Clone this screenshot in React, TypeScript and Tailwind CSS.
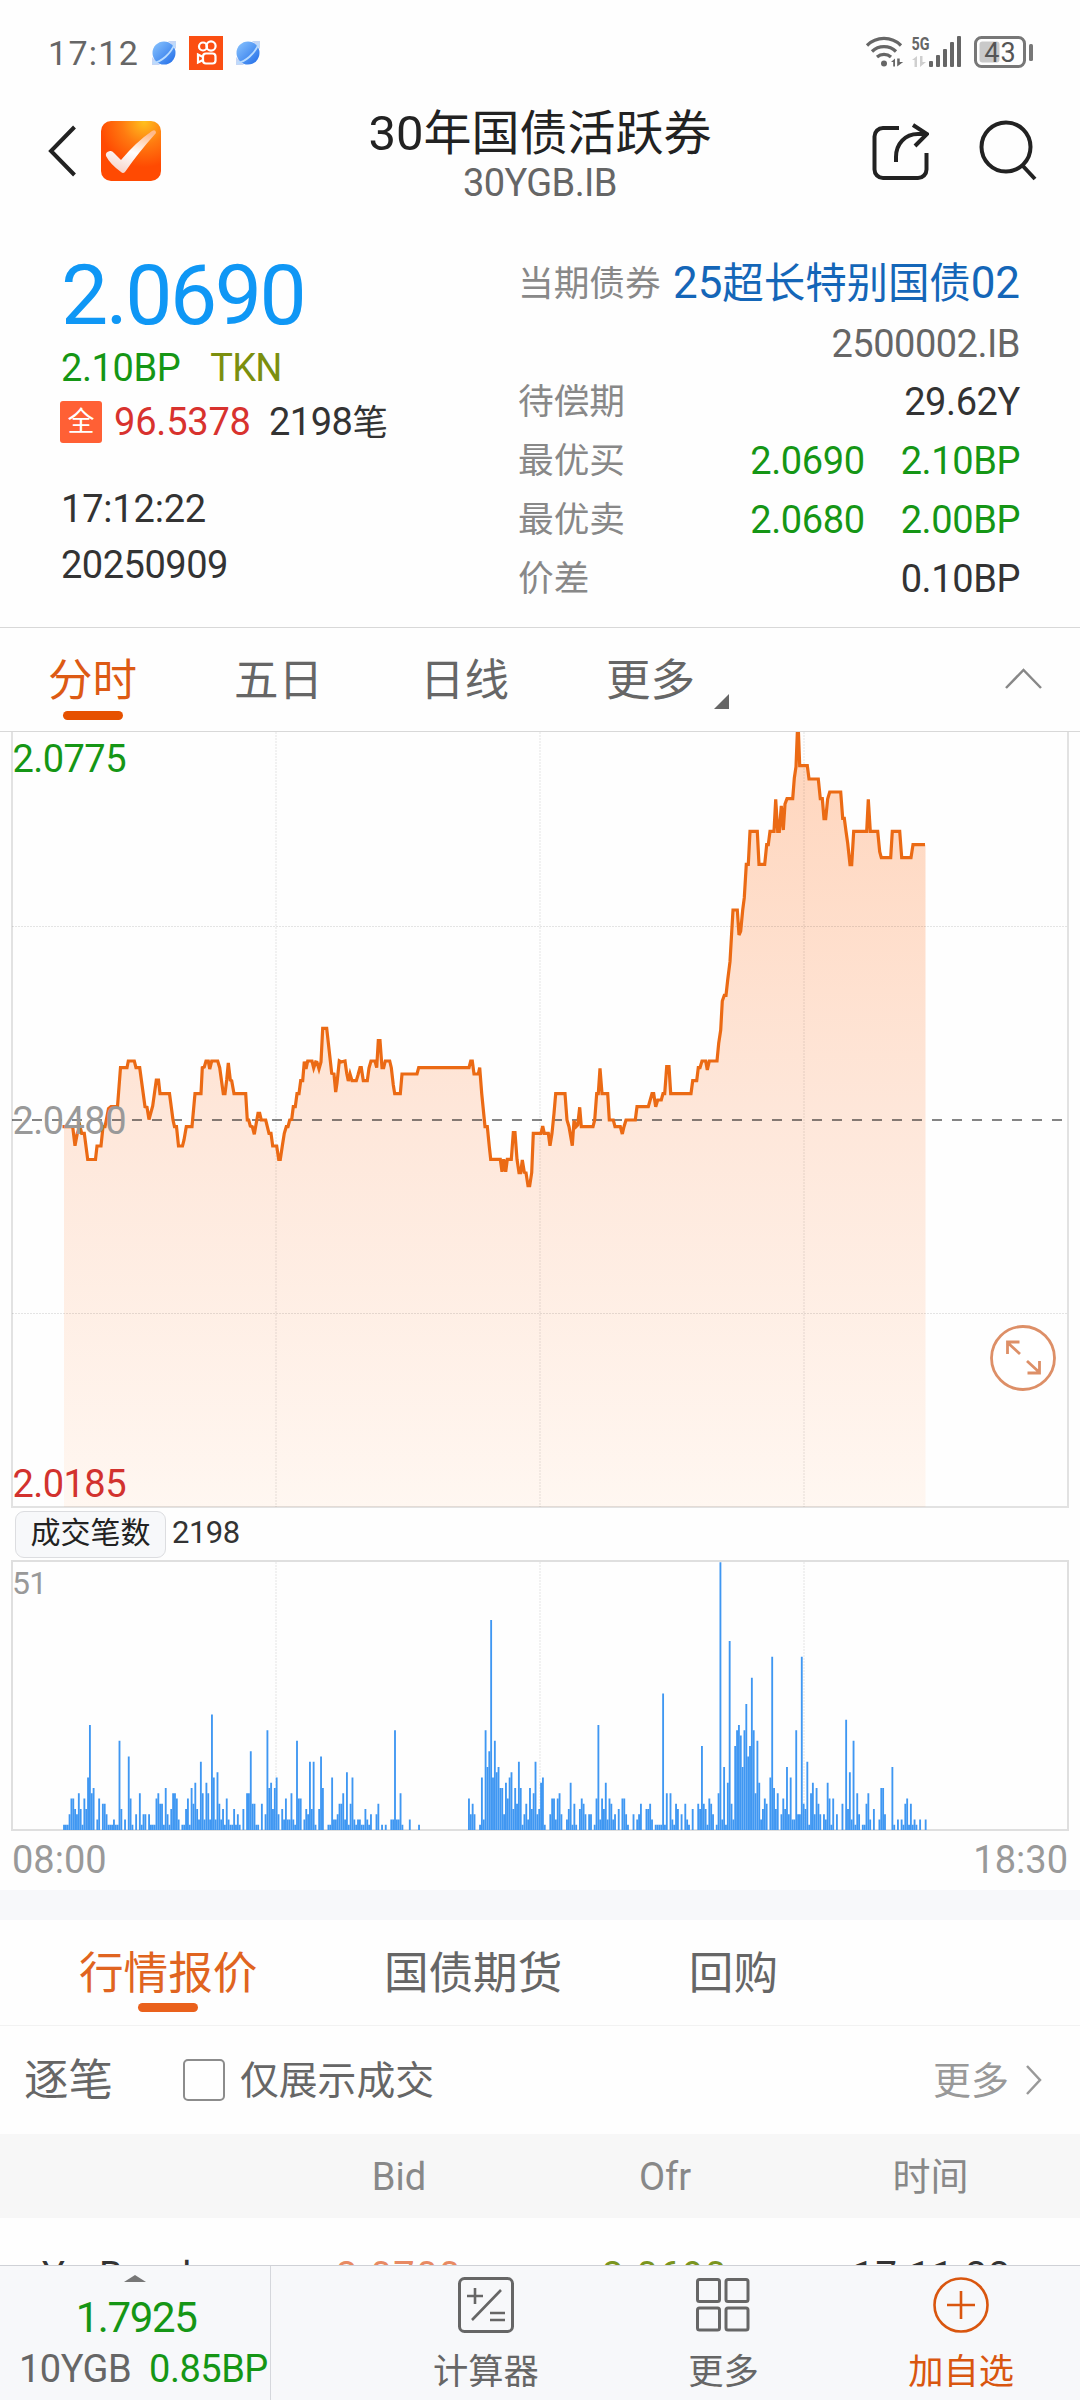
import clsx from 'clsx';

const PRICE_POINTS =
  '62.5,1126.7 72.7,1126.7 75,1145.7 77.3,1133.3 80,1126.5 81.7,1133.3 84.3,1133.3 87.7,1159.5 95.5,1159.5 97,1146 101,1146 103,1126.7 105,1126.7 108.5,1108.7 111,1106.7 117.5,1106.7 120.5,1067.7 127,1067.7 128.3,1061 134.3,1061 136,1067.7 139.7,1067.7 145,1106.7 147,1107.3 149,1119.5 152.7,1106 156.3,1080 158.5,1080 160,1093.7 169.5,1093.7 173,1120 174.5,1126.7 176.5,1126.7 178.5,1146 182.5,1146 184,1140 186.3,1126.7 192,1126.7 195,1093.7 201,1093.7 202.3,1067.7 204.3,1067 206,1061 208.3,1061 209.7,1069 211.7,1061 217.7,1061 219.7,1067.7 223.3,1093.7 225,1093.7 226.7,1080 228.3,1063 230.3,1080 231.7,1080.7 234,1093.7 245.7,1093.7 247.3,1120 248.7,1120 250.3,1126 252.3,1126.7 254.3,1134.3 258,1113.3 259.7,1113.3 261.3,1120 265.7,1120 269,1133.3 271,1133.3 272.7,1146 276.7,1146 278.7,1159.3 280.3,1159.3 282.3,1146 284.3,1133.3 286.3,1126.7 288,1126.7 289.7,1120 291.7,1119.5 293.3,1106.7 295.3,1106.7 297,1093.7 299,1093.7 300.7,1080.7 302.7,1080.7 304.3,1061.7 306,1069 307.7,1061 312,1061 313.7,1068 315.7,1062 317,1062.3 319,1069 321,1062 322.7,1028.3 326.7,1028.3 331.7,1073.3 334,1074 335.7,1092 337,1083 339.3,1061 341,1062 345,1061 346.7,1073.3 348.3,1081 350,1074 352,1080.7 356.3,1080.7 358,1075 360,1067.7 361.3,1067.7 363.3,1080.7 367.3,1080.7 369,1068 371,1061 375,1061 376.7,1067.7 378.3,1040.7 380,1040.7 382,1067.7 383.7,1067.7 385.3,1061 389.7,1061 391.3,1067.7 393.3,1085 394.7,1093.7 400.3,1093.7 402,1074 417,1074 418.7,1067.7 469,1067.7 470.7,1061 472.3,1061 474,1074 478.3,1074 479.7,1067.7 481.7,1093.3 485,1126.7 487.3,1126.7 489.3,1146.7 490.7,1159.3 500.3,1159.3 502,1171.7 503.7,1159.3 505.7,1171.7 507.3,1159.3 511.3,1159.3 513.3,1132.7 515,1132.7 517,1159.3 519,1172.7 520.7,1172.7 522.3,1160 524.3,1172.3 526,1172.7 528,1185.7 529.7,1185.7 531.7,1172.7 533.3,1133.3 541,1133.3 542.7,1126 544.3,1133.3 548.3,1133.3 550,1145.7 552,1133.3 554,1113.3 555.7,1093.7 565,1093.7 567,1120 569,1126.7 572.3,1145.7 574,1120.7 576,1126.7 577.7,1125 579.7,1107.3 581.3,1126.7 593,1126.7 594.7,1120 596.7,1093.7 598.3,1093.7 600,1068.3 602,1093.7 607.7,1093.7 609.3,1120 613.3,1120 615,1126.7 620.3,1126.7 622.3,1134 624,1126.7 626,1120 635.3,1120 637,1106.7 648.3,1106.7 652,1093.7 653.7,1093.7 655.7,1106.7 657.7,1100 661.3,1100 663,1093.7 664.7,1093.7 666.7,1066.7 669,1066.7 670.7,1093.7 691,1093.7 692.7,1080.7 696.7,1080.7 698.3,1067.7 700,1067.7 702,1061 705.7,1061 707.3,1070 709.3,1061 717,1061 718.7,1043.3 720.7,1030 722.3,1001 724.3,995.3 726,995.3 727.7,980 730,961.7 733,910 737.3,910 739,935 740.7,931 742.7,910 744.3,897.7 746.3,864.3 748.3,864.3 750,831.3 757.3,831.3 759,864.3 764.7,864.3 766.7,844.7 768.3,844.7 770,831.3 774,831.3 775.7,799.3 777.7,831.3 779.3,831.3 781.3,806 783.3,830 785,804 787,798.7 792.7,798.7 794.3,778.3 796,766.7 797.3,733.5 798.5,733.5 799.7,765.7 807.3,765.7 809,779 818.3,779 820.3,798.7 822.3,798.7 824,818.7 825.7,818.7 827.7,798.7 829.7,792 840.7,792 842.7,818.3 844.3,818.3 846,831.3 847.7,843.3 850,864.7 851.7,864.7 853.7,831.3 866.7,831.3 868.3,799.3 870.3,831.3 877.7,831.3 879.7,851.7 881.3,857.7 890.7,857.7 892.3,831.3 899.7,831.3 901.7,857.7 911,857.7 913,844.7 925,844.7';

// trades per minute, starting at the first deal of the day
const MORNING = [
  1, 1, 1, 3, 6, 6, 4, 3, 7, 4, 1, 6, 4, 10, 20, 7, 8, 0, 2, 6, 0, 5, 5, 3, 1, 1, 1, 2, 1, 1, 17, 4, 0, 2, 0, 14, 6, 1, 0, 3,
  0, 7, 1, 3, 3, 0, 3, 1, 1, 1, 6, 7, 5, 5, 1, 8, 3, 1, 4, 7, 7, 6, 2, 0, 1, 1, 4, 6, 1, 8, 5, 9, 4, 2, 13, 7, 2, 9, 7, 2,
  22, 10, 2, 11, 5, 2, 4, 1, 6, 2, 1, 1, 4, 1, 3, 1, 0, 4, 0, 7, 7, 15, 5, 5, 1, 1, 0, 5, 0, 3, 19, 8, 9, 4, 8, 10, 3, 0, 4, 2,
  6, 2, 2, 7, 2, 1, 17, 6, 6, 0, 2, 4, 3, 13, 4, 13, 1, 0, 4, 14, 8, 0, 0, 1, 1, 10, 2, 2, 3, 5, 5, 7, 2, 11, 1, 5, 10, 2, 1, 2,
  2, 1, 1, 4, 2, 1, 3, 0, 0, 3, 5, 0, 1, 0, 1, 0, 0, 2, 2, 19, 2, 2, 7, 1, 0, 0, 0, 2, 0, 0, 0, 0, 1,
];

const AFTERNOON_START = 219;
const AFTERNOON = [
  6, 3, 5, 3, 0, 0, 1, 10, 2, 19, 12, 15, 40, 10, 17, 11, 12, 8, 8, 3, 9, 6, 10, 11, 4, 8, 5, 13, 8, 1, 3, 5, 2, 8, 4, 7, 13, 3, 4, 9,
  10, 1, 0, 0, 3, 6, 6, 2, 6, 7, 3, 0, 0, 2, 4, 9, 1, 5, 1, 0, 4, 6, 5, 3, 0, 3, 3, 0, 1, 6, 20, 2, 6, 4, 9, 2, 6, 5, 2, 3,
  0, 4, 0, 6, 6, 3, 1, 0, 0, 3, 0, 2, 3, 5, 0, 0, 4, 4, 5, 2, 0, 1, 1, 1, 1, 26, 1, 7, 0, 7, 2, 1, 5, 4, 0, 3, 0, 5, 2, 1,
  0, 4, 0, 0, 5, 4, 16, 5, 4, 1, 6, 5, 3, 0, 1, 7, 51, 2, 12, 1, 9, 36, 5, 2, 16, 19, 20, 18, 12, 19, 24, 14, 16, 29, 19, 7, 17, 9, 2, 4,
  6, 5, 0, 10, 33, 8, 4, 7, 0, 3, 6, 4, 12, 3, 10, 2, 2, 19, 3, 3, 33, 5, 4, 13, 1, 7, 9, 3, 8, 5, 3, 0, 3, 2, 9, 6, 1, 6, 0, 3,
  0, 0, 5, 0, 21, 4, 11, 2, 17, 1, 7, 3, 0, 1, 1, 5, 7, 2, 0, 4, 0, 0, 2, 8, 8, 3, 0, 0, 0, 12, 1, 0, 2, 0, 2, 1, 5, 6, 1, 5,
  1, 2, 1, 0, 2, 0, 0, 2,
];

const GRID_X = [276, 540, 804];

const quoteRows = [
  { label: '待偿期', values: ['29.62Y'], color: 'text-[#333]' },
  { label: '最优买', values: ['2.0690', '2.10BP'], color: 'text-[#159615]' },
  { label: '最优卖', values: ['2.0680', '2.00BP'], color: 'text-[#159615]' },
  { label: '价差', values: ['0.10BP'], color: 'text-[#333]' },
];

function Planet() {
  return (
    <svg width="26" height="26" viewBox="0 0 26 26">
      <defs>
        <linearGradient id="planet" x1="0" y1="0" x2="1" y2="1">
          <stop offset="0" stopColor="#8cc6ff" />
          <stop offset="1" stopColor="#1f6be8" />
        </linearGradient>
      </defs>
      <path d="M17 1h8v8zM1 17v8h8z" fill="#c5d6f5" />
      <circle cx="13" cy="13" r="11.5" fill="url(#planet)" />
      <path d="M2 23c8-1 18-9 22-20" stroke="#b9dcff" strokeWidth="1.8" fill="none" />
    </svg>
  );
}

function StatusBar() {
  return (
    <div className="flex h-[101px] items-center justify-between pt-1 pr-[46px] pl-[48px]">
      <div className="flex items-center">
        <span className="w-[103px] text-[34px] leading-none tracking-[1.3px] text-[#666]">17:12</span>
        <Planet />
        <svg className="mx-3" width="34" height="34" viewBox="0 0 34 34">
          <rect width="34" height="34" fill="#fb4e12" />
          <g fill="none" stroke="#fff" strokeWidth="2.2">
            <circle cx="14" cy="10.5" r="4" />
            <circle cx="22" cy="10" r="4.6" />
            <rect x="14" y="17.5" width="12.5" height="10" rx="3" />
            <path d="M14 21l-5-2.5v8l5-2.5" />
          </g>
        </svg>
        <Planet />
      </div>
      <svg className="overflow-visible" width="168" height="34" viewBox="0 0 168 34">
        <g fill="none" stroke="#666" strokeWidth="3.2">
          <path d="M1 9.5a24 24 0 0 1 34 0" />
          <path d="M6 15.5a17 17 0 0 1 24 0" />
          <path d="M11 21a10.5 10.5 0 0 1 14 0" />
        </g>
        <circle cx="18" cy="27.5" r="3" fill="#666" />
        <path d="M25 26l4-3.5v8h-1.8v-4.5zM31.2 22.5v8l6-4.5h-3.5v-3.5z" fill="#666" />
        <text x="45.5" y="13.5" fontSize="19" fontWeight="700" fill="#666" textLength="18" lengthAdjust="spacingAndGlyphs">5G</text>
        <path d="M46 24l5-4v11h-2.5v-7zM54 20v11l6-5h-3.5v-6z" fill="#cfcfcf" />
        <g fill="#666">
          <rect x="63" y="25" width="4" height="6" rx="1" />
          <rect x="70" y="19" width="4" height="12" rx="1" />
          <rect x="77" y="13" width="4" height="18" rx="1" />
          <rect x="84" y="6" width="4" height="25" rx="1" />
          <rect x="91" y="0" width="4" height="31" rx="1" />
        </g>
        <rect x="109.5" y="1.5" width="49" height="29" rx="6" fill="none" stroke="#777" strokeWidth="3" />
        <rect x="113.5" y="5.5" width="20" height="21" rx="3" fill="#c9c9c9" />
        <text x="134.5" y="25.5" fontSize="27" textAnchor="middle" letterSpacing="1" fill="#555">43</text>
        <rect x="163" y="8" width="4" height="17" rx="1.5" fill="#777" />
      </svg>
    </div>
  );
}

function Header() {
  return (
    <header className="grid h-[100px] grid-cols-[240px_1fr_240px] grid-rows-[100px] items-center">
      <div className="flex items-center gap-[25px] pl-[47px]">
        <svg width="29" height="52" viewBox="0 0 29 52">
          <path d="M27.5 2L4 26l23.5 24" fill="none" stroke="#222" strokeWidth="4" />
        </svg>
        <svg width="60" height="60" viewBox="0 0 60 60">
          <defs>
            <radialGradient id="logo" cx="0.72" cy="0.02" r="0.75">
              <stop offset="0" stopColor="#ffc01e" />
              <stop offset="0.5" stopColor="#ff7a10" />
              <stop offset="1" stopColor="#ff4a02" />
            </radialGradient>
            <linearGradient id="tick" x1="0.7" y1="0" x2="0.3" y2="1">
              <stop offset="0" stopColor="#ffb98a" />
              <stop offset="0.5" stopColor="#fff" />
              <stop offset="1" stopColor="#f6d3c8" />
            </linearGradient>
          </defs>
          <rect width="60" height="60" rx="10" fill="url(#logo)" />
          <path d="M5 35q-1-4 4-5 2-.5 4 2l7 7q15-18 31-29 4-2 4 2-18 20-31 39-2 2-4 0-11-8-15-16z" fill="url(#tick)" />
        </svg>
      </div>
      <div className="pt-[3px] text-center">
        <h1 className="text-[48px] leading-[60px] text-[#222]">
          <span className="text-[49px]">30</span>年国债活跃券
        </h1>
        <div className="text-[38px] leading-[38px] tracking-[-0.6px] text-[#666]">30YGB.IB</div>
      </div>
      <div className="flex items-center gap-[50px] pl-[31px]">
        <svg width="58" height="60" viewBox="0 0 58 60" fill="none" stroke="#222" strokeWidth="4">
          <path d="M28 7H12a8.5 8.5 0 0 0-8.5 8.5v33A8.5 8.5 0 0 0 12 57h35a8.5 8.5 0 0 0 8.5-8.5V32" />
          <path d="M25 41V36c0-13 9-23 22-23h9M42 4l14 9-12 12" />
        </svg>
        <svg width="58" height="62" viewBox="0 0 58 62" fill="none" stroke="#222" strokeWidth="4">
          <circle cx="27" cy="27" r="24.5" />
          <path d="M43 45l13 14" />
        </svg>
      </div>
    </header>
  );
}

function Quote() {
  return (
    <section className="flex h-[427px] justify-between border-b border-[#d8d8d8] pt-[53px] pr-[60px] pl-[60px] text-[38px] tracking-[-0.2px] text-[#333]">
      <div>
        <div className="pl-px text-[84px] leading-[84px] tracking-[-2.5px] text-[#0f97f5]">2.0690</div>
        <div className="flex gap-[30px] leading-[60px] text-[#159615]">
          <span className="pl-px tracking-[-0.4px]">2.10BP</span>
          <span className="tracking-[-0.8px] text-[#7b8f0e]">TKN</span>
        </div>
        <div className="flex h-[49px] items-center leading-[49px]">
          <span className="-mt-px h-[42px] w-[42px] rounded-[3px] bg-[#ff6035] text-center text-[27px] leading-[42px] text-white">全</span>
          <span className="ml-3 w-[155px] text-[#d8322e]">96.5378</span>
          <span className="tracking-[-0.5px]">2198<span className="text-[35.5px]">笔</span></span>
        </div>
        <div className="mt-[34px] pl-px leading-14">17:12:22</div>
        <div className="pl-px leading-14 tracking-[-0.5px]">20250909</div>
      </div>
      <div className="w-[502px]">
        <div className="flex h-[60px] items-center justify-between">
          <span className="pt-px text-[35.7px] tracking-normal text-[#888]">当期债券</span>
          <span className="-mt-[3px] text-[41.5px] tracking-[-0.1px] whitespace-nowrap text-[#1466b8]">
            <span className="text-[44px]">25</span>超长特别国债<span className="text-[44px]">02</span>
          </span>
        </div>
        <div className="h-[59px] text-right leading-[60px] tracking-[-0.5px] text-[#666]">2500002.IB</div>
        {quoteRows.map((row) => (
          <div key={row.label} className="flex h-[59px] items-center justify-between">
            <span className="pt-px text-[35.7px] tracking-normal text-[#888]">{row.label}</span>
            <span className={clsx('flex gap-9 tracking-[-0.4px]', row.color)}>
              {row.values.map((value) => (
                <span key={value}>{value}</span>
              ))}
            </span>
          </div>
        ))}
      </div>
    </section>
  );
}

function PeriodTabs() {
  return (
    <nav className="flex h-[104px] justify-between border-b border-[#d8d8d8] pr-[37px] pl-12 text-[44.5px] leading-[60px] text-[#666]">
      <div className="flex gap-[97px] pt-[23px]">
        <div className="flex flex-col items-center text-[#dd5a14]">
          分时
          <span className="h-[9px] w-[60px] rounded-full bg-[#e65100]" />
        </div>
        <div>五日</div>
        <div>日线</div>
        <div className="flex">
          更多
          <svg className="mt-[43px] ml-[19px]" width="15" height="15" viewBox="0 0 15 15">
            <path d="M15 0v15H0z" fill="#666" />
          </svg>
        </div>
      </div>
      <svg className="mt-[39px]" width="39" height="24" viewBox="0 0 39 24">
        <path d="M2 21L19.5 3 37 21" fill="none" stroke="#888" strokeWidth="2.5" />
      </svg>
    </nav>
  );
}

function PriceChart() {
  return (
    <svg className="block" width="1080" height="777" viewBox="0 732 1080 777">
      <defs>
        <linearGradient id="area" gradientUnits="userSpaceOnUse" x1="0" y1="732" x2="0" y2="1508">
          <stop offset="0" stopColor="#ffd5bc" />
          <stop offset="0.5" stopColor="#fee7da" />
          <stop offset="1" stopColor="#fff7f1" />
        </linearGradient>
      </defs>
      <polygon points={`64,1507 64,1126.7 ${PRICE_POINTS} 925.5,844.7 925.5,1507`} fill="url(#area)" />
      <g stroke="#000" strokeOpacity="0.1" strokeDasharray="2 1" strokeWidth="1">
        {GRID_X.map((x) => (
          <line key={x} x1={x} x2={x} y1="732" y2="1507" />
        ))}
        <line x1="12" x2="1068" y1="926.5" y2="926.5" />
        <line x1="12" x2="1068" y1="1313.5" y2="1313.5" />
      </g>
      <line x1="12" x2="1064" y1="1120" y2="1120" stroke="#000" strokeOpacity="0.48" strokeWidth="2" strokeDasharray="10 10" />
      <polyline points={PRICE_POINTS} fill="none" stroke="#eb6a14" strokeWidth="3.2" />
      <path d="M12 732V1507H1068V732" fill="none" stroke="#000" strokeOpacity="0.11" strokeWidth="2" />
      <g fontSize="38">
        <text x="12.5" y="772" fill="#159615" textLength="114">2.0775</text>
        <text x="12.5" y="1133.5" fill="#999" textLength="114">2.0480</text>
        <text x="12.5" y="1497" fill="#d2322e" textLength="114">2.0185</text>
      </g>
      <g fill="none" stroke="#dd8f67" strokeWidth="2.8">
        <circle cx="1023" cy="1358" r="31.5" fill="#fff" />
        <path d="M1020 1354l-12-11M1007.5 1354v-12h12M1027 1361l12 11M1039.5 1361v12h-12" />
      </g>
    </svg>
  );
}

function VolumeBars({ values, start }: { values: number[]; start: number }) {
  return (
    <>
      {values.map((value, i) =>
        value > 0 ? (
          <rect key={i} x={63.1 + (start + i) * 1.849} y={1830 - value * 5.25} width="1.849" height={value * 5.25} />
        ) : null,
      )}
    </>
  );
}

function VolumeChart() {
  return (
    <section className="h-[381px]">
      <div className="flex h-[51px] items-center gap-[6px] pl-[15px]">
        <span className="h-[47px] w-[151px] rounded-[9px] border border-[#dcdde0] bg-[#f7f8fa] text-center text-[30px] leading-[41px] text-[#222]">
          成交笔数
        </span>
        <span className="-mt-[4px] text-[31px] leading-[47px] tracking-[-0.5px] text-[#333]">2198</span>
      </div>
      <svg className="block" width="1080" height="272" viewBox="0 1560 1080 272">
        <g stroke="#000" strokeOpacity="0.1" strokeDasharray="2 1">
          {GRID_X.map((x) => (
            <line key={x} x1={x} x2={x} y1="1562" y2="1830" />
          ))}
        </g>
        <rect x="12" y="1561" width="1056" height="269" fill="none" stroke="#dfdfdf" strokeWidth="2" />
        <g fill="#3f97f2">
          <VolumeBars values={MORNING} start={0} />
          <VolumeBars values={AFTERNOON} start={AFTERNOON_START} />
        </g>
        <text x="12" y="1593.5" fontSize="32" letterSpacing="-0.7" fill="#999">51</text>
      </svg>
      <div className="flex h-[58px] justify-between pr-3 pl-3 text-[38px] leading-[57px] text-[#999]">
        <span>08:00</span>
        <span>18:30</span>
      </div>
    </section>
  );
}

function QuoteTable() {
  return (
    <section>
      <nav className="flex h-[106px] gap-[126.5px] border-b border-[#f2f2f2] pt-[25px] pl-[79px] text-[44.6px] leading-[58px] text-[#666]">
        <div className="flex flex-col items-center text-[#e06420]">
          行情报价
          <span className="h-[9px] w-[60px] rounded-full bg-[#ea611c]" />
        </div>
        <div>国债期货</div>
        <div>回购</div>
      </nav>
      <div className="flex h-[108px] items-center pr-[36px] pl-6 text-[#666]">
        <span className="pt-[2px] text-[44.5px]">逐笔</span>
        <span className="ml-[70px] h-[42px] w-[42px] rounded-[5px] border-[2.5px] border-[#8c8c8c]" />
        <span className="ml-[15px] pt-[3px] text-[38.8px]">仅展示成交</span>
        <span className="ml-auto pt-[2px] text-[38px] text-[#999]">更多</span>
        <svg className="ml-[15px]" width="20" height="32" viewBox="0 0 20 32">
          <path d="M3 2l13 14L3 30" fill="none" stroke="#999" strokeWidth="2.5" />
        </svg>
      </div>
      <div className="grid h-[84px] grid-cols-[266px_266px_266px_1fr] items-center bg-[#f7f7f7] pt-[2px] text-center text-[38px] text-[#888]">
        <span />
        <span>Bid</span>
        <span>Ofr</span>
        <span className="pr-[17px]">时间</span>
      </div>
      <div className="grid h-[47px] grid-cols-[266px_266px_266px_1fr] overflow-hidden text-center text-[38px] leading-[116px] tracking-[1.5px] text-[#333]">
        <span className="pl-[42px] text-left">Yu Bond</span>
        <span className="text-[#e88a63]">2.0700</span>
        <span className="text-[#7b951f]">2.0690</span>
        <span className="pr-[14px]">17:11:22</span>
      </div>
    </section>
  );
}

function BottomBar() {
  return (
    <footer className="flex h-[135px] border-t border-[#cfd1d6] bg-[#f7f8fa] text-[35.3px] leading-[46px] text-[#666]">
      <div className="relative flex w-[271px] flex-col items-center overflow-hidden border-r border-[#d5d7dc] pt-[26px] text-[38px]">
        <svg className="absolute top-[9px] left-[124px]" width="22" height="7" viewBox="0 0 22 7">
          <path d="M11 0l11 7H0z" fill="#777" />
        </svg>
        <span className="pl-[2px] text-[42px] leading-[52px] tracking-[-1.4px] text-[#159615]">1.7925</span>
        <span className="flex w-full gap-[18px] pl-[19px] leading-[50px] tracking-[-0.5px] whitespace-nowrap">
          10YGB <span className="text-[#159615]">0.85BP</span>
        </span>
      </div>
      <div className="ml-24 grid flex-1 grid-cols-3 pt-[11px]">
        <div className="flex flex-col items-center gap-[16px]">
          <svg width="56" height="56" viewBox="0 0 56 56" fill="none" stroke="#666" strokeWidth="3">
            <rect x="1.5" y="1.5" width="53" height="53" rx="5" />
            <path d="M9 19h16M17 11v16M43 13L14 43M32 36h15M32 43h15" strokeWidth="2.6" />
          </svg>
          <span>计算器</span>
        </div>
        <div className="flex flex-col items-center gap-[16px]">
          <svg width="56" height="56" viewBox="0 0 56 56" fill="none" stroke="#666" strokeWidth="3">
            <rect x="2.5" y="2.5" width="22" height="22" rx="2" />
            <rect x="31" y="2.5" width="22" height="22" rx="2" />
            <rect x="2.5" y="31" width="22" height="22" rx="2" />
            <rect x="31" y="31" width="22" height="22" rx="2" />
          </svg>
          <span>更多</span>
        </div>
        <div className="flex flex-col items-center gap-[16px] text-[#d9560f]">
          <svg width="56" height="56" viewBox="0 0 56 56" fill="none" stroke="currentColor" strokeWidth="2.6">
            <circle cx="28" cy="28" r="26.5" />
            <path d="M14 28h28M28 14v28" />
          </svg>
          <span>加自选</span>
        </div>
      </div>
    </footer>
  );
}

export default function App() {
  return (
    <div className="h-[2400px] w-[1080px] overflow-hidden bg-[#fefefe] font-[Roboto,'Noto_Sans_CJK_SC',sans-serif]">
      <StatusBar />
      <Header />
      <Quote />
      <PeriodTabs />
      <PriceChart />
      <VolumeChart />
      <div className="h-[30px] bg-[#f7f8fa]" />
      <QuoteTable />
      <BottomBar />
    </div>
  );
}
